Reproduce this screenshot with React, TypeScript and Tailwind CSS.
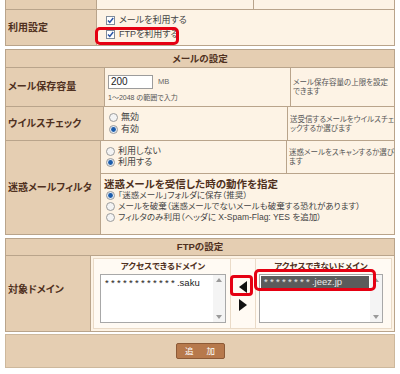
import React from 'react';

function Check() {
  return (
    <svg width="9" height="9" viewBox="0 0 9 9" className="shrink-0">
      <rect x="0.5" y="0.5" width="8" height="8" fill="#fff" stroke="#7f8b99" />
      <path d="M2 4.4 L3.8 6.4 L7.2 2" fill="none" stroke="#2b55a6" strokeWidth="1.5" />
    </svg>
  );
}

function Radio({ on }: { on?: boolean }) {
  return (
    <svg width="9" height="9" viewBox="0 0 9 9" className="shrink-0">
      <circle cx="4.5" cy="4.5" r="4" fill={on ? '#e4ebf3' : '#f3f3f3'} stroke="#9b9b9b" />
      {on && <circle cx="4.5" cy="4.5" r="2.4" fill="#1b5cab" />}
    </svg>
  );
}

function Option({ on, children }: { on?: boolean; children: React.ReactNode }) {
  return (
    <div className="flex h-[11px] items-center gap-[3px] whitespace-nowrap">
      <Radio on={on} />
      <span>{children}</span>
    </div>
  );
}

function ScrollBar() {
  return (
    <div className="flex w-[12px] flex-col items-center justify-between bg-[#f4f4f4] py-[3px]">
      <svg width="6" height="4" viewBox="0 0 6 4"><path d="M0 4 L3 0 L6 4 Z" fill="#9a9a9a" /></svg>
      <svg width="6" height="4" viewBox="0 0 6 4"><path d="M0 0 L3 4 L6 0 Z" fill="#9a9a9a" /></svg>
    </div>
  );
}

export default function App() {
  return (
    <div className="h-[374px] w-[400px] overflow-hidden bg-white px-[5px] font-['Liberation_Sans','Noto_Sans_CJK_JP',sans-serif] leading-none text-[#444] [font-feature-settings:'palt']">
      {/* 利用設定 */}
      <div className="border-x border-b border-[#b9a48b]">
        <div className="flex h-[10px] border-b border-[#b9a48b]">
          <div className="w-[91px] border-r border-[#b9a48b] bg-[#e5ceb2]" />
          <div className="flex flex-1 bg-[#fdf3e5]">
            <div className="w-[157px] border-r border-[#b9a48b]" />
          </div>
        </div>
        <div className="flex h-[35px]">
          <div className="flex w-[91px] items-center border-r border-[#b9a48b] bg-[#e5ceb2] pl-[2px] text-[10px] font-bold text-[#4f3020]">
            利用設定
          </div>
          <div className="relative flex flex-1 flex-col justify-center gap-[5px] bg-[#fdf3e5] pl-[9px] text-[9px]">
            <div className="flex items-center gap-[4px]"><Check />メールを利用する</div>
            <div className="flex items-center gap-[4px]"><Check />FTPを利用する</div>
            <div className="absolute left-[-2px] top-[17px] h-[18px] w-[84px] rounded-[5px] border-[3px] border-[#e50012]" />
          </div>
        </div>
      </div>

      {/* メールの設定 */}
      <div className="mt-[3px] border border-[#b9a48b]">
        <div className="flex h-[18px] items-center justify-center border-b border-[#b9a48b] bg-[#e5ceb2] text-[9.5px] font-bold text-[#4f3020]">
          メールの設定
        </div>

        <div className="flex h-[39px] border-b border-[#b9a48b]">
          <div className="flex w-[99px] items-center border-r border-[#b9a48b] bg-[#e5ceb2] pl-[2px] text-[10px] font-bold text-[#4f3020]">
            メール保存容量
          </div>
          <div className="w-[186px] border-r border-[#b9a48b] bg-[#fdf3e5] pl-[3px] pt-[7px]">
            <div className="flex items-center gap-[5px]">
              <div className="flex h-[14px] w-[45px] items-center border border-[#9c9c9c] bg-white pl-[2px] text-[10px] text-[#222]">
                200
              </div>
              <span className="text-[7.5px] text-[#666]">MB</span>
            </div>
            <div className="mt-[5px] text-[7px] text-[#555]">1〜2048 の範囲で入力</div>
          </div>
          <div className="flex flex-1 items-center bg-[#fdf3e5] pl-[2px] text-[7.5px] leading-[9px] text-[#555]">
            <p className="whitespace-nowrap">メール保存容量の上限を設定<br />できます</p>
          </div>
        </div>

        <div className="flex h-[34px] border-b border-[#b9a48b]">
          <div className="flex w-[99px] items-center border-r border-[#b9a48b] bg-[#e5ceb2] pl-[2px] text-[10px] font-bold text-[#4f3020]">
            ウイルスチェック
          </div>
          <div className="flex w-[186px] flex-col justify-center gap-[1px] border-r border-[#b9a48b] bg-[#fdf3e5] pl-[5px] text-[9px]">
            <Option>無効</Option>
            <Option on>有効</Option>
          </div>
          <div className="flex flex-1 items-center bg-[#fdf3e5] pl-[2px] text-[7.5px] leading-[9px] text-[#555]">
            <p className="whitespace-nowrap">送受信するメールをウイルスチェ<br />ックするか選びます</p>
          </div>
        </div>

        <div className="flex h-[93px]">
          <div className="flex w-[99px] items-center border-r border-[#b9a48b] bg-[#e5ceb2] pl-[2px] text-[10px] font-bold text-[#4f3020]">
            迷惑メールフィルタ
          </div>
          <div className="flex flex-1 flex-col">
            <div className="flex h-[33px] border-b border-[#b9a48b]">
              <div className="flex w-[186px] flex-col justify-center border-r border-[#b9a48b] bg-[#fdf3e5] pl-[5px] text-[9px]">
                <Option>利用しない</Option>
                <Option on>利用する</Option>
              </div>
              <div className="flex flex-1 items-center bg-[#fdf3e5] pl-[2px] text-[7.5px] leading-[9px] text-[#555]">
                <p className="whitespace-nowrap">迷惑メールをスキャンするか選び<br />ます</p>
              </div>
            </div>
            <div className="flex-1 bg-[#fdf3e5] pl-[3px] pt-[4px] text-[8.5px]">
              <div className="text-[10.5px] font-bold leading-[12px] text-[#4f3020]">迷惑メールを受信した時の動作を指定</div>
              <div className="pl-[2px]">
                <Option on>「迷惑メール」フォルダに保存（推奨）</Option>
                <Option>メールを破棄（迷惑メールでないメールも破棄する恐れがあります）</Option>
                <Option>フィルタのみ利用（ヘッダに X-Spam-Flag: YES を追加）</Option>
              </div>
            </div>
          </div>
        </div>
      </div>

      {/* FTPの設定 */}
      <div className="mt-[3px] border border-[#b9a48b]">
        <div className="flex h-[17px] items-center justify-center border-b border-[#b9a48b] bg-[#e5ceb2] text-[9.5px] font-bold text-[#4f3020]">
          FTPの設定
        </div>
        <div className="flex h-[75px]">
          <div className="flex w-[85px] items-center border-r border-[#b9a48b] bg-[#e5ceb2] pb-[8px] pl-[2px] text-[10px] font-bold text-[#4f3020]">
            対象ドメイン
          </div>
          <div className="flex-1 bg-[#fdf3e5] p-[2px]">
            <div className="relative flex h-full border border-[#eadbc8] bg-[#fffaf3]">
              <div className="w-[137px] border-r border-[#eadbc8] pl-[6px] pt-[3px]">
                <div className="w-[126px] text-center text-[8.5px] font-bold text-[#4f3020]">アクセスできるドメイン</div>
                <div className="mt-[3px] flex h-[49px] w-[126px] border border-[#a8a8a8] bg-white">
                  <div className="flex-1 overflow-hidden whitespace-nowrap pl-[4px] pt-[3px] text-[9.5px] text-[#222]">
                    <span className="tracking-[2.3px]">************</span>.saku
                  </div>
                  <ScrollBar />
                </div>
              </div>
              <div className="flex w-[25px] flex-col items-center gap-[6px] border-r border-[#eadbc8] pt-[22px]">
                <svg width="8" height="12" viewBox="0 0 8 12"><path d="M8 0 L0 6 L8 12 Z" fill="#111" /></svg>
                <svg width="8" height="12" viewBox="0 0 8 12"><path d="M0 0 L8 6 L0 12 Z" fill="#111" /></svg>
              </div>
              <div className="flex-1 pl-[3px] pt-[3px]">
                <div className="w-[124px] text-center text-[8.5px] font-bold text-[#4f3020]">アクセスできないドメイン</div>
                <div className="mt-[3px] flex h-[49px] w-[124px] border border-[#a8a8a8] bg-white">
                  <div className="flex-1 p-[1px]">
                    <div className="flex h-[12px] items-center whitespace-nowrap bg-[#5b5b5b] pl-[3px] text-[9.5px] text-[#e8e8e8]">
                      <span className="tracking-[2.3px]">********</span>.jeez.jp
                    </div>
                  </div>
                  <ScrollBar />
                </div>
              </div>
              <div className="absolute left-[136px] top-[16px] h-[21px] w-[23px] rounded-[4px] border-[3px] border-[#e50012]" />
              <div className="absolute left-[160px] top-[10px] h-[22px] w-[122px] rounded-[5px] border-[3px] border-[#e50012]" />
            </div>
          </div>
        </div>
      </div>

      {/* 追加 */}
      <div className="mt-[2px] flex h-[34px] items-center justify-center border border-[#cdb89c] bg-[#e5ceb2]">
        <div className="flex h-[16px] w-[49px] items-center justify-center gap-[13px] rounded-[2px] border border-[#8c5a37] bg-[#b7794c] text-[8.5px] text-white">
          <span>追</span>
          <span>加</span>
        </div>
      </div>
    </div>
  );
}
